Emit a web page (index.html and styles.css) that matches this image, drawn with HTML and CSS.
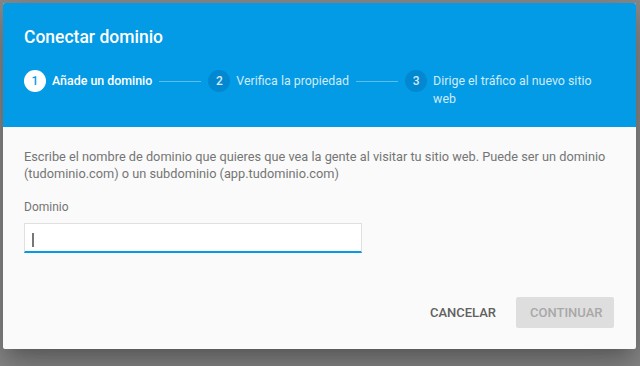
FILE: index.html
```html
<!DOCTYPE html>
<html lang="es">
<head>
    <meta charset="UTF-8">
    <meta name="viewport" content="width=device-width, initial-scale=1.0">
    <title>Conectar dominio</title>
    <link rel="stylesheet" href="styles.css">
</head>
<body>
    <div class="overlay">
        <div class="dialog">
            <header class="dialog-header">
                <h1 class="dialog-title">Conectar dominio</h1>
                <div class="stepper">
                    <div class="step step-active">
                        <span class="step-num">1</span>
                        <span class="step-label">Añade un dominio</span>
                    </div>
                    <div class="step-line"></div>
                    <div class="step">
                        <span class="step-num">2</span>
                        <span class="step-label">Verifica la propiedad</span>
                    </div>
                    <div class="step-line"></div>
                    <div class="step step-last">
                        <span class="step-num">3</span>
                        <span class="step-label">Dirige el tráfico al nuevo sitio web</span>
                    </div>
                </div>
            </header>

            <main class="dialog-body">
                <p class="intro">Escribe el nombre de dominio que quieres que vea la gente al visitar tu sitio web. Puede ser un dominio (tudominio.com) o un subdominio (app.tudominio.com)</p>
                <label class="field-label">Dominio</label>
                <div class="field-input"><span class="caret"></span></div>
            </main>

            <footer class="dialog-actions">
                <button class="btn btn-flat">Cancelar</button>
                <button class="btn btn-disabled">Continuar</button>
            </footer>
        </div>
    </div>
</body>
</html>
```

FILE: styles.css
```css
html, body {
    margin: 0;
    padding: 0;
    height: 100%;
}

body {
    background-color: #8a8a8a;
    font-family: Roboto, 'Liberation Sans', sans-serif;
    overflow: hidden;
}

.overlay {
    padding: 3px 4px 0 3px;
}

.dialog {
    height: 346px;
    background-color: #fafafa;
    border-radius: 2px;
    display: flex;
    flex-direction: column;
    box-shadow: 0 11px 15px -7px rgba(0,0,0,0.2), 0 24px 38px 3px rgba(0,0,0,0.14), 0 9px 46px 8px rgba(0,0,0,0.12);
}

/* header with stepper */
.dialog-header {
    background-color: #039be5;
    color: white;
    height: 124px;
    padding: 21px 24px 0 21px;
    box-sizing: border-box;
    border-radius: 2px 2px 0 0;
}

.dialog-title {
    margin: 0;
    font-size: 17.5px;
    font-weight: 500;
    line-height: 26px;
}

.stepper {
    display: flex;
    align-items: flex-start;
    margin-top: 20px;
}

.step {
    display: flex;
    align-items: flex-start;
    flex-shrink: 0;
}

.step-last {
    flex-shrink: 1;
}

.step-num {
    width: 22px;
    height: 22px;
    border-radius: 50%;
    background-color: #0288d1;
    color: rgba(255,255,255,0.85);
    font-size: 12px;
    font-weight: 500;
    line-height: 22px;
    text-align: center;
    flex-shrink: 0;
}

.step-active .step-num {
    background-color: white;
    color: #039be5;
}

.step-label {
    margin-left: 6px;
    font-size: 12.4px;
    font-weight: 400;
    line-height: 18px;
    padding-top: 2px;
    color: rgba(255,255,255,0.82);
}

.step-active .step-label {
    color: white;
    font-weight: 500;
}

.step-line {
    width: 42px;
    flex-shrink: 0;
    height: 1px;
    margin: 11px 7px 0 7px;
    background-color: rgba(255,255,255,0.35);
}

/* body */
.dialog-body {
    padding: 0 16px 0 21px;
}

.intro {
    margin: 21px 0 0;
    font-size: 12.75px;
    line-height: 17px;
    color: #757575;
}

.field-label {
    display: block;
    margin-top: 17px;
    font-size: 12px;
    line-height: 16px;
    color: #757575;
}

.field-input {
    margin-top: 8px;
    width: 338px;
    height: 30px;
    box-sizing: border-box;
    background-color: white;
    border: 1px solid #e0e0e0;
    border-bottom: 2px solid #039be5;
    padding: 9px 0 0 7px;
}

.caret {
    display: block;
    width: 2px;
    height: 14px;
    background-color: #777;
}

/* actions */
.dialog-actions {
    margin-top: auto;
    display: flex;
    justify-content: flex-end;
    align-items: center;
    padding: 0 22px 21px 0;
}

.btn {
    border: none;
    font-family: Roboto, 'Liberation Sans', sans-serif;
    font-size: 13px;
    font-weight: 500;
    text-transform: uppercase;
    height: 31px;
    padding: 0 14px;
    border-radius: 2px;
    background: none;
}

.btn-flat {
    color: #616161;
    margin-right: 6px;
}

.btn-disabled {
    background-color: #dedede;
    color: #a8a8a8;
    width: 98px;
}
```
